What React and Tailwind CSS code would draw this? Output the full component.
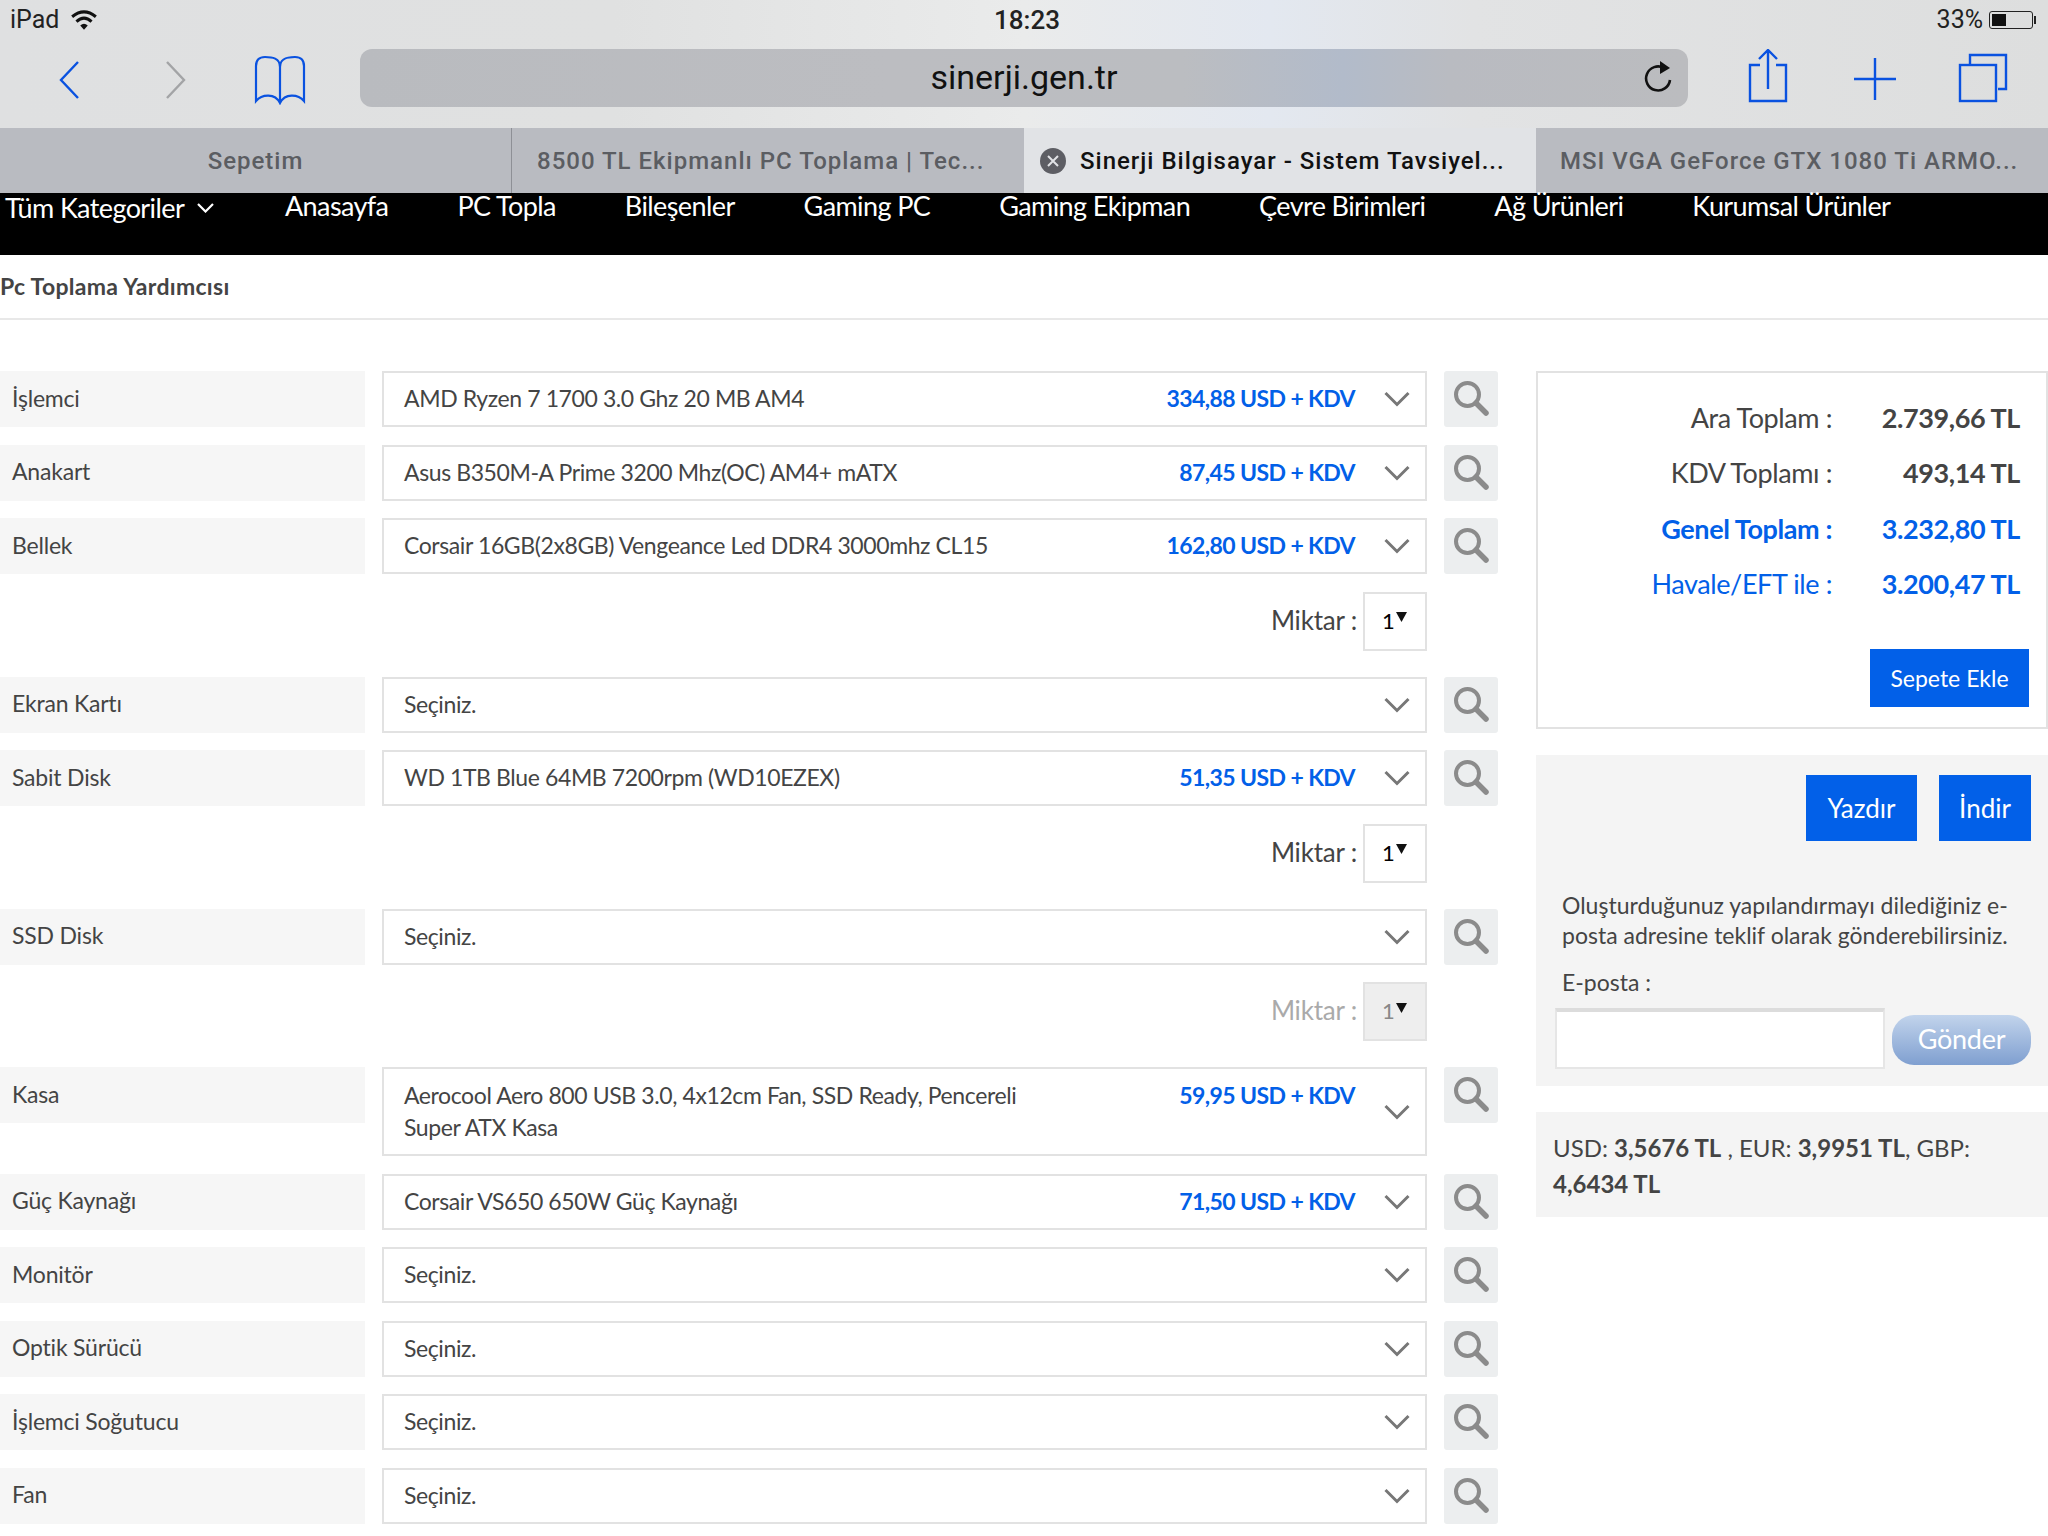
import { Fragment } from 'react';

const parts = [
  { label: 'İşlemci', value: 'AMD Ryzen 7 1700 3.0 Ghz 20 MB AM4', price: '334,88 USD + KDV' },
  { label: 'Anakart', value: 'Asus B350M-A Prime 3200 Mhz(OC) AM4+ mATX', price: '87,45 USD + KDV' },
  { label: 'Bellek', value: 'Corsair 16GB(2x8GB) Vengeance Led DDR4 3000mhz CL15', price: '162,80 USD + KDV', qty: 'on' },
  { label: 'Ekran Kartı', value: 'Seçiniz.' },
  { label: 'Sabit Disk', value: 'WD 1TB Blue 64MB 7200rpm (WD10EZEX)', price: '51,35 USD + KDV', qty: 'on' },
  { label: 'SSD Disk', value: 'Seçiniz.', qty: 'off' },
  { label: 'Kasa', value: 'Aerocool Aero 800 USB 3.0, 4x12cm Fan, SSD Ready, Pencereli', value2: 'Super ATX Kasa', price: '59,95 USD + KDV' },
  { label: 'Güç Kaynağı', value: 'Corsair VS650 650W Güç Kaynağı', price: '71,50 USD + KDV' },
  { label: 'Monitör', value: 'Seçiniz.' },
  { label: 'Optik Sürücü', value: 'Seçiniz.' },
  { label: 'İşlemci Soğutucu', value: 'Seçiniz.' },
  { label: 'Fan', value: 'Seçiniz.' },
];

const navLinks = ['Anasayfa', 'PC Topla', 'Bileşenler', 'Gaming PC', 'Gaming Ekipman', 'Çevre Birimleri', 'Ağ Ürünleri', 'Kurumsal Ürünler'];

const totals = [
  { label: 'Ara Toplam :', value: '2.739,66 TL', labelClass: 'text-[#444]', valueClass: 'text-[#444]' },
  { label: 'KDV Toplamı :', value: '493,14 TL', labelClass: 'text-[#444]', valueClass: 'text-[#444]' },
  { label: 'Genel Toplam :', value: '3.232,80 TL', labelClass: 'text-[#0260e8] font-bold', valueClass: 'text-[#0260e8]' },
  { label: 'Havale/EFT ile :', value: '3.200,47 TL', labelClass: 'text-[#0260e8]', valueClass: 'text-[#0260e8]' },
];

const Chevron = ({ className }) => (
  <svg width="26" height="16" viewBox="0 0 26 16" fill="none" className={className}>
    <path d="M1.5 2 L13 13.5 L24.5 2" stroke="#777" strokeWidth="3" />
  </svg>
);

const SearchIcon = () => (
  <svg width="36" height="36" viewBox="0 0 36 36" fill="none">
    <circle cx="14.5" cy="14.5" r="11.5" stroke="#8b8b8b" strokeWidth="4" />
    <path d="M23 23 L33 33" stroke="#8b8b8b" strokeWidth="5.5" strokeLinecap="round" />
  </svg>
);

const QtyRow = ({ disabled }) => (
  <div className="flex h-[59px] w-[1427px] mb-[8.5px] justify-end items-center">
    <span className={`text-[26px] tracking-[-0.2px] mr-[6px] pb-[2px] ${disabled ? 'text-[#aaa]' : 'text-[#444]'}`}>Miktar :</span>
    <div className={`w-[64px] h-[59px] border-2 border-[#e2e2e2] flex items-center pl-[17px] pb-[2px] text-[22px] ${disabled ? 'bg-[#eee] text-[#888]' : 'bg-white text-black'}`}>
      1
      <svg width="11" height="10" viewBox="0 0 11 10" className="ml-[1px] mb-[6px]">
        <path d="M0 0 L11 0 L5.5 10 Z" fill="#111" />
      </svg>
    </div>
  </div>
);

const PartRow = ({ part }) => (
  <div className="flex items-start">
    <div className="w-[365px] h-[56px] bg-[#f6f6f6] flex items-center pl-[12px] pb-[2px] text-[#444] tracking-[-0.2px]">{part.label}</div>
    <div className={`ml-[17px] w-[1045px] border-2 border-[#e2e2e2] flex pl-[20px] ${part.value2 ? 'h-[89px] pt-[10px]' : 'h-[56px] items-center'}`}>
      <div className={`w-[680px] text-[#444] leading-[32px] whitespace-nowrap tracking-[-0.4px] ${part.value2 ? '' : 'pb-[2px]'}`}>
        {part.value}
        {part.value2 && (
          <>
            <br />
            {part.value2}
          </>
        )}
      </div>
      <div className={`w-[271px] text-right font-bold text-[#0260e8] leading-[32px] whitespace-nowrap tracking-[-0.6px] ${part.value2 ? '' : 'pb-[2px]'}`}>{part.price}</div>
      <Chevron className={`ml-[29px] ${part.value2 ? 'mt-[25px]' : ''}`} />
    </div>
    <div className="ml-[17px] w-[54px] h-[56px] pb-[2px] bg-[#eceeef] rounded-[3px] flex items-center justify-center">
      <SearchIcon />
    </div>
  </div>
);

export default function App() {
  return (
    <div className="w-[2048px] h-[1536px] overflow-hidden bg-white font-['Lato',sans-serif] text-[23px]">
      {/* ipad safari chrome */}
      <div className="h-[128px] bg-[linear-gradient(90deg,#dfe0e1_0%,#e0e1e1_30%,#eaebeb_50%,#e3e8f0_62%,#e2e3e4_72%,#dddede_100%)]">
        <div className="h-[40px] flex items-center justify-between pl-[10px] pr-[12px] font-['Roboto',sans-serif] text-[25px] text-[#222]">
          <div className="flex items-center w-[300px]">
            <span>iPad</span>
            <svg width="28" height="22" viewBox="0 0 26 20" className="ml-[11px]" fill="none" stroke="#111" strokeWidth="2.8">
              <path d="M2 7 Q13 -2 24 7" />
              <path d="M6 11.5 Q13 5 20 11.5" />
              <path d="M13 19 L9.5 15 Q13 12 16.5 15 Z" fill="#111" stroke="none" />
            </svg>
          </div>
          <span className="font-medium text-[26px] ml-[8px]">18:23</span>
          <div className="flex items-center justify-end w-[300px]">
            <span>33%</span>
            <div className="ml-[6px] w-[44px] h-[18px] border border-[#222] rounded-[3px] p-[2px]">
              <div className="w-[14px] h-full bg-[#111]"></div>
            </div>
            <div className="w-[2px] h-[8px] bg-[#222] ml-[1px]"></div>
          </div>
        </div>
        <div className="flex items-start pl-[59px] pt-[9px]">
          <svg width="20" height="38" viewBox="0 0 20 38" fill="none" stroke="#0a52e0" strokeWidth="2.4" className="mt-[12px]">
            <path d="M19 1 L2 19 L19 37" />
          </svg>
          <svg width="20" height="38" viewBox="0 0 20 38" fill="none" stroke="#a3a4a6" strokeWidth="2.4" className="ml-[87px] mt-[12px]">
            <path d="M1 1 L18 19 L1 37" />
          </svg>
          <svg width="52" height="50" viewBox="0 0 52 50" fill="none" stroke="#0a52e0" strokeWidth="2.2" className="ml-[68px] mt-[6px]">
            <path d="M26 12 C26 3 18 2 11 2 C5 2 2 5 2 11 L2 46 C8 39 21 38 26 48 C31 38 44 39 50 46 L50 11 C50 5 47 2 41 2 C34 2 26 3 26 12 L26 48" />
          </svg>
          <div className="ml-[54px] w-[1328px] h-[58px] rounded-[12px] bg-[linear-gradient(90deg,#b9bbbf_0%,#bcbdc1_40%,#bbbdc1_62%,#b2bbca_74%,#b9bbc1_82%,#bbbcbf_100%)] flex items-center relative">
            <span className="w-full text-center font-['Roboto',sans-serif] text-[34px] text-[#111] -mt-[2px]">sinerji.gen.tr</span>
            <svg width="30" height="34" viewBox="0 0 30 34" fill="none" className="absolute right-[14px] top-[12px]">
              <path d="M20 7 A12 12 0 1 0 26 19" stroke="#111" strokeWidth="2.6" />
              <path d="M16 0 L26 7 L16 13 Z" fill="#111" />
            </svg>
          </div>
          <svg width="40" height="54" viewBox="0 0 40 54" fill="none" stroke="#0a52e0" strokeWidth="2.4" className="ml-[60px]">
            <path d="M12 16 L2 16 L2 52 L38 52 L38 16 L28 16" />
            <path d="M20 40 L20 2 M11 10 L20 1 L29 10" />
          </svg>
          <svg width="44" height="44" viewBox="0 0 44 44" fill="none" stroke="#0a52e0" strokeWidth="2.4" className="ml-[65px] mt-[8px]">
            <path d="M22 1 L22 43 M1 22 L43 22" />
          </svg>
          <svg width="50" height="50" viewBox="0 0 50 50" fill="none" stroke="#0a52e0" strokeWidth="2.4" className="ml-[61px] mt-[4px]">
            <path d="M12 12 L12 2 L48 2 L48 36 L40 36" />
            <rect x="2" y="12" width="36" height="36" />
          </svg>
        </div>
      </div>

      <div className="flex h-[65px] font-['Roboto',sans-serif] font-medium text-[24px] tracking-[1px]">
        <div className="w-[512px] bg-[#b9bbc1] border-r border-[#8e9096] flex items-center justify-center text-[#5b5d62]">Sepetim</div>
        <div className="w-[512px] bg-[#b9bbc1] flex items-center pl-[25px] text-[#5b5d62] whitespace-nowrap">8500 TL Ekipmanlı PC Toplama | Tec...</div>
        <div className="w-[512px] bg-[#e1e3e6] flex items-center pl-[16px] text-[#111] whitespace-nowrap">
          <span className="w-[26px] h-[26px] rounded-full bg-[#5d5e64] flex items-center justify-center mr-[14px]">
            <svg width="12" height="12" viewBox="0 0 12 12" stroke="#e1e3e6" strokeWidth="2">
              <path d="M1 1 L11 11 M11 1 L1 11" />
            </svg>
          </span>
          Sinerji Bilgisayar - Sistem Tavsiyel...
        </div>
        <div className="w-[512px] bg-[#b9bbc1] flex items-center pl-[24px] text-[#5b5d62] whitespace-nowrap">MSI VGA GeForce GTX 1080 Ti ARMO...</div>
      </div>

      {/* site nav */}
      <div className="h-[62px] bg-black text-white text-[27px] tracking-[-0.6px] flex items-start pl-[5px] whitespace-nowrap leading-[26px]">
        <div className="flex items-center w-[280px] pt-[2px]">
          Tüm Kategoriler
          <svg width="17" height="10" viewBox="0 0 17 10" fill="none" stroke="#fff" strokeWidth="2.2" className="ml-[13px]">
            <path d="M1 1 L8.5 8.5 L16 1" />
          </svg>
        </div>
        <div className="flex gap-[69px]">
          {navLinks.map((link) => (
            <span key={link}>{link}</span>
          ))}
        </div>
      </div>

      <div className="h-[65px] border-b-2 border-[#e8e8e8] flex items-center font-bold text-[#444] tracking-[0.3px]">Pc Toplama Yardımcısı</div>

      <div className="flex pt-[51px]">
        <div className="w-[1498px] flex flex-col gap-[17.5px]">
          {parts.map((part) => (
            <Fragment key={part.label}>
              <PartRow part={part} />
              {part.qty && <QtyRow disabled={part.qty === 'off'} />}
            </Fragment>
          ))}
        </div>

        <div className="ml-[38px] w-[512px]">
          <div className="h-[358px] border-2 border-[#e2e2e2] flex flex-col items-end pt-[17px] pr-[26px] text-[27px]">
            {totals.map((row) => (
              <div key={row.label} className="flex h-[55.5px] items-center tracking-[-0.4px]">
                <span className={row.labelClass}>{row.label}</span>
                <span className={`w-[188px] text-right font-bold ${row.valueClass}`}>{row.value}</span>
              </div>
            ))}
            <button className="mt-[37px] -mr-[9px] w-[159px] h-[58px] bg-[#0260e8] text-white text-[23px]">Sepete Ekle</button>
          </div>

          <div className="mt-[26px] h-[331px] bg-[#f4f4f4] pt-[20px] pl-[19px] pr-[17px]">
            <div className="flex justify-end gap-[22px] text-white text-[26px]">
              <button className="w-[111px] h-[66px] bg-[#0260e8]">Yazdır</button>
              <button className="w-[92px] h-[66px] bg-[#0260e8]">İndir</button>
            </div>
            <p className="mt-[49px] text-[#444] leading-[30px] pl-[7px] pr-[3px]">Oluşturduğunuz yapılandırmayı dilediğiniz e-posta adresine teklif olarak gönderebilirsiniz.</p>
            <div className="mt-[15px] pl-[7px] text-[#444]">E-posta :</div>
            <div className="flex items-center mt-[8px]">
              <div className="w-[330px] h-[61px] bg-white border-2 border-[#e6e6e6] border-t-4 border-t-[#dcdcdc]"></div>
              <button className="ml-[7px] mt-[3px] w-[139px] h-[50px] rounded-[22px] bg-[linear-gradient(180deg,#c2d4ec_0%,#7f9fd0_100%)] text-white text-[27px] tracking-[-0.3px]">Gönder</button>
            </div>
          </div>

          <div className="mt-[26px] h-[105px] bg-[#f4f4f4] pt-[18px] pl-[17px] pr-[30px] text-[#444] text-[24px] leading-[36px]">
            USD: <b>3,5676 TL</b> , EUR: <b>3,9951 TL</b>, GBP: <b>4,6434 TL</b>
          </div>
        </div>
      </div>
    </div>
  );
}
